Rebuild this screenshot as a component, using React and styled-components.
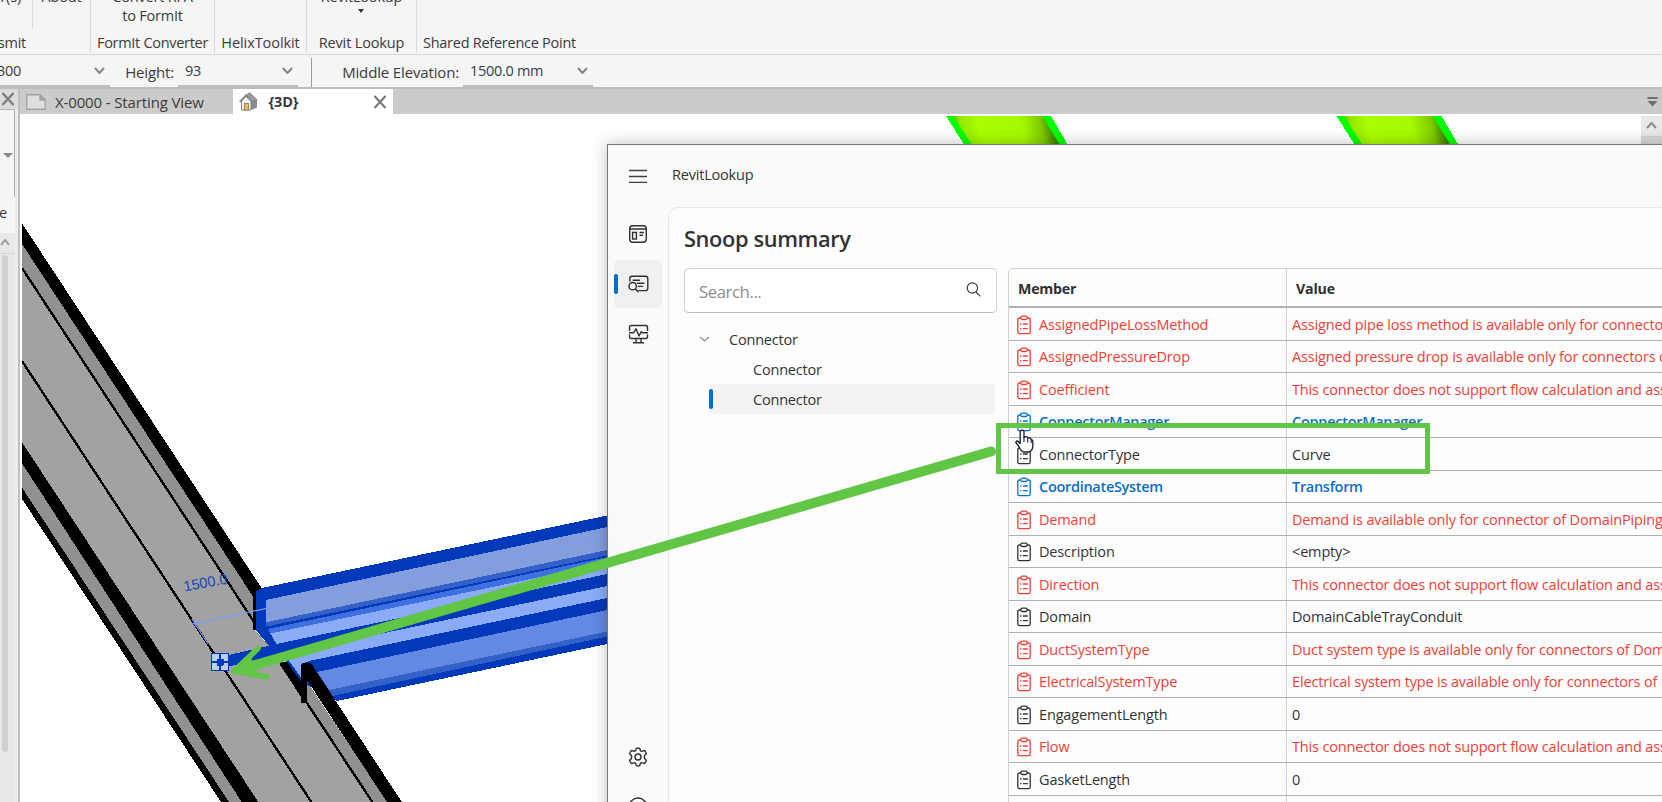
import React from "react";
import styled, { createGlobalStyle, css } from "styled-components";

const GlobalStyle = createGlobalStyle`
  *, *::before, *::after { box-sizing: border-box; }
  body {
    margin: 0;
    overflow: hidden;
    font-family: "Open Sans", "Noto Sans", sans-serif;
    font-size: 14.5px;
    letter-spacing: -0.2px;
    color: #3b3b3b;
  }
  svg { display: block; flex: none; }
`;

const Screen = styled.div`
  position: relative;
  display: flex;
  flex-direction: column;
  width: 1662px;
  height: 802px;
  overflow: hidden;
  background: #f5f5f5;
  white-space: nowrap;
`;

/* ---------- ribbon ---------- */

const Ribbon = styled.div`
  display: flex;
  flex: none;
  height: 55px;
  border-bottom: 1px solid #d9d9d9;
`;

const RibbonPanel = styled.div`
  display: flex;
  flex-direction: column;
  justify-content: flex-end;
  width: ${(p) => p.$width}px;
  height: 53px;
  overflow: hidden;
  text-align: center;
  border-right: 1px solid #dadada;
`;

const LastPanel = styled(RibbonPanel)`
  border-right: 0;
`;

const RibbonTools = styled.div`
  display: flex;
  flex: none;
  justify-content: center;
  line-height: 19px;
  height: 38px;
  margin-bottom: 8px;
`;

const SplitTools = styled(RibbonTools)`
  height: 41px;
  justify-content: flex-start;
  margin-bottom: 5px;
`;

const ToolCell = styled.div`
  display: flex;
  justify-content: ${(p) => (p.$end ? "flex-end" : "center")};
  width: ${(p) => p.$width}px;
  border-right: ${(p) => (p.$divided ? "1px solid #dadada" : "0")};
  padding-right: ${(p) => p.$pad || 0}px;
`;

const ToolMenu = styled.div`
  display: flex;
  flex-direction: column;
  align-items: center;
  gap: 3px;
`;

const Caption = styled.div`
  flex: none;
  line-height: 20px;
  height: 20px;
  letter-spacing: ${(p) => p.$tracking ?? -0.25}px;
`;

const EndCaption = styled(Caption)`
  display: flex;
  justify-content: flex-end;
  width: 26px;
`;

/* ---------- options bar ---------- */

const OptionsBar = styled.div`
  display: flex;
  flex: none;
  height: 34px;
  align-items: flex-start;
  border-bottom: 2px solid #bdbdbd;
`;

const OptionLabel = styled.label`
  width: ${(p) => p.$width}px;
  padding-top: 7px;
  text-align: right;
  font-size: 15px;
  letter-spacing: -0.15px;
  line-height: 20px;
`;

const Combo = styled.div`
  display: flex;
  align-items: center;
  justify-content: space-between;
  width: ${(p) => p.$width}px;
  height: 32px;
  margin-left: ${(p) => p.$gap || 0}px;
  padding: 1px 5px 0 ${(p) => p.$inset || 0}px;
  border-bottom: 2px solid #bdbdbd;
  letter-spacing: -0.3px;
  line-height: 20px;
`;

const EndValue = styled.span`
  display: flex;
  justify-content: flex-end;
  width: 21px;
`;

const OptionDivider = styled.div`
  width: 1px;
  height: 29px;
  margin: 3px 0 0 13px;
  background: #9b9b9b;
`;

/* ---------- workspace ---------- */

const Workspace = styled.div`
  display: flex;
  flex: 1;
  min-height: 0;
`;

const Palette = styled.div`
  display: flex;
  flex-direction: column;
  flex: none;
  width: 20px;
  background: #ededed;
  border-right: 2px solid #bfbfbf;
`;

const PaletteHeader = styled.div`
  height: 20px;
  padding: 3px 0 0 1px;
  background: #dcdcdc;
`;

const TypeSelector = styled.div`
  height: 88px;
  width: 15px;
  padding: 43px 0 0 3px;
  background: #f5f5f5;
  border-top: 1px solid #b5b5b5;
  border-right: 1px solid #adadad;
`;

const TypeCaption = styled.div`
  display: flex;
  justify-content: flex-end;
  height: 36px;
  width: 15px;
  padding: 6px 8px 0 0;
  line-height: 20px;
  background: #f5f5f5;
`;

const PaletteScroll = styled.div`
  flex: 1;
  width: 15px;
  background: #e8e8e8;
`;

const ScrollUp = styled.div`
  height: 21px;
  padding: 6px 0 0 0;
  border-bottom: 1px solid #d6d6d6;
`;

const Thumb = styled.div`
  width: 6px;
  height: 497px;
  margin: 1px 0 0 1.5px;
  border-radius: 3px;
  background: #d1d1d1;
`;

const Documents = styled.div`
  display: flex;
  flex-direction: column;
  flex: 1;
  min-width: 0;
`;

const TabStrip = styled.div`
  display: flex;
  flex: none;
  height: 25px;
  background: #cbcbcb;
`;

const Tab = styled.div`
  display: flex;
  align-items: center;
  width: ${(p) => p.$width}px;
  padding: 0 6px 0 6px;
  font-size: 15px;
  letter-spacing: -0.13px;
  ${(p) =>
    p.$active &&
    css`
      background: #fff;
      font-weight: 700;
      font-size: 14.5px;
    `}
`;

const TabTitle = styled.span`
  flex: 1;
  margin-left: ${(p) => p.$gap}px;
  line-height: 22px;
`;

const TabMenu = styled.div`
  margin: 8px 4px 0 auto;
`;

const Canvas = styled.div`
  display: flex;
  flex: 1;
  justify-content: space-between;
  min-height: 0;
  background: #fff;
`;

const CanvasScroll = styled.div`
  width: 21px;
  margin-top: 2px;
  background: #dadada;
`;

const CanvasScrollUp = styled.div`
  height: 21px;
  padding: 6px 0 0 5px;
  background: #e8e8e8;
  border-bottom: 1px solid #cfcfcf;
`;

/* ---------- lookup window ---------- */

const LookupWindow = styled.div`
  position: absolute;
  left: 607px;
  top: 144px;
  width: 1100px;
  height: 700px;
  display: flex;
  flex-direction: column;
  background: #fafafa;
  border: 1px solid #757575;
  box-shadow: 0 0 15px rgba(0, 0, 0, 0.26);
`;

const TitleBar = styled.div`
  display: flex;
  flex: none;
  align-items: center;
  height: 62px;
  padding-left: 20px;
  gap: 24px;
  line-height: 20px;
  color: #333;
`;

const AppName = styled.span`
  padding-bottom: 2px;
`;

const WindowBody = styled.div`
  display: flex;
  flex: 1;
`;

const NavRail = styled.nav`
  display: flex;
  flex: none;
  flex-direction: column;
  align-items: flex-start;
  width: 60px;
  padding: 3px 0 0 6px;
`;

const NavItem = styled.div`
  display: flex;
  flex: none;
  align-items: center;
  width: 48px;
  height: 48px;
  margin-bottom: 2px;
  border-radius: 5px;
  color: #303030;
  background: ${(p) => (p.$active ? "#f0f0f0" : "transparent")};
`;

const ActiveBar = styled.span`
  width: 4px;
  height: 20px;
  border-radius: 2px;
  background: ${(p) => (p.$on ? "#006fca" : "transparent")};
  margin-right: 9.5px;
`;

const NavSpacer = styled.div`
  flex: none;
  height: 373px;
`;

const Content = styled.main`
  flex: 1;
  padding: 19px 0 0 15px;
  background: #fdfdfd;
  border: 1px solid #e8e8e8;
  border-right: 0;
  border-radius: 10px 0 0 0;
`;

const Heading = styled.h1`
  margin: 0;
  height: 41px;
  font-size: 21.8px;
  font-weight: 600;
  line-height: 24px;
  letter-spacing: -0.37px;
  color: #333;
`;

const Columns = styled.div`
  display: flex;
  gap: 11px;
`;

const Side = styled.div`
  width: 313px;
  flex: none;
`;

const SearchBox = styled.div`
  display: flex;
  align-items: center;
  justify-content: space-between;
  height: 45px;
  padding: 1px 15px 0 14px;
  border: 1px solid #cfcfcf;
  border-bottom-color: #bdbdbd;
  border-radius: 5px;
  background: #fff;
  font-size: 16.8px;
  letter-spacing: -0.45px;
  color: #8c8c8c;
`;

const Tree = styled.div`
  display: flex;
  flex-direction: column;
  padding-top: 11px;
`;

const TreeNode = styled.div`
  display: flex;
  align-items: center;
  height: 30px;
  margin: 0 2px 0 ${(p) => (p.$child ? 25 : 0)}px;
  padding-left: ${(p) => (p.$child ? 0 : 15)}px;
  gap: ${(p) => (p.$child ? 40 : 19)}px;
  border-radius: 4px;
  line-height: 20px;
  color: #333;
  background: ${(p) => (p.$selected ? "#f3f3f3" : "transparent")};
`;

const TreeLabel = styled.span`
  padding-top: 2px;
`;

const TreeBar = styled.span`
  width: 4px;
  height: 20px;
  border-radius: 2px;
  background: ${(p) => (p.$on ? "#006fca" : "transparent")};
`;

const Table = styled.div`
  width: 900px;
  height: 600px;
  flex: none;
  border: 1px solid #cfcfcf;
  border-radius: 5px 0 0 0;
`;

const HeaderRow = styled.div`
  display: flex;
  height: 39px;
  border-bottom: 2px solid #b0b0b0;
  font-weight: 700;
  font-size: 14.2px;
  letter-spacing: -0.2px;
  color: #303030;
`;

const tones = { red: "#ef4036", blue: "#0a6fc4", plain: "#333333" };

const Row = styled.div`
  display: flex;
  height: 32.5px;
  border-bottom: 1px solid #b0b0b0;
  color: ${(p) => tones[p.$tone]};
  font-weight: ${(p) => (p.$tone === "blue" ? 600 : 400)};
  letter-spacing: ${(p) => (p.$tone === "blue" ? -0.3 : -0.16)}px;
  line-height: 20px;
`;

const Cell = styled.div`
  display: flex;
  align-items: center;
  gap: 8px;
  padding: 2px 0 0 ${(p) => p.$inset}px;
  ${(p) =>
    p.$member
      ? css`
          width: 278px;
          flex: none;
          border-right: 1px solid #d0d0d0;
        `
      : css`
          flex: 1;
        `}
`;

const Markup = styled.svg`
  position: absolute;
  left: 0;
  top: 0;
  pointer-events: none;
`;

/* ---------- icons ---------- */

const Chevron = ({ w = 11, h = 7, up, color = "#848484", stroke = 2 }) => (
  <svg width={w} height={h} viewBox={`0 0 ${w} ${h}`} fill="none" stroke={color} strokeWidth={stroke}>
    <path d={up ? `M1 ${h - 1}L${w / 2} 1L${w - 1} ${h - 1}` : `M1 1L${w / 2} ${h - 1}L${w - 1} 1`} />
  </svg>
);

const Cross = () => (
  <svg width="14" height="14" viewBox="0 0 14 14" stroke="#7a7a7a" strokeWidth="2.2">
    <path d="M1.5 1L12.5 13M12.5 1L1.5 13" />
  </svg>
);

const Triangle = ({ w, h, color }) => (
  <svg width={w} height={h} viewBox={`0 0 ${w} ${h}`} fill={color}>
    <path d={`M0 0H${w}L${w / 2} ${h}Z`} />
  </svg>
);

const SheetIcon = () => (
  <svg width="20" height="16" viewBox="0 0 20 16" fill="#dedede" stroke="#a3a3a3" strokeWidth="1.4">
    <path d="M.8.8H14L19.2 6V15.2H.8Z" />
    <path d="M14 .8V6H19.2Z" fill="#ababab" />
  </svg>
);

const HouseIcon = () => (
  <svg width="19" height="19" viewBox="0 0 19 19">
    <path d="M10.5 1L18 8V15.5L12 18V7Z" fill="#8b8b8b" />
    <path d="M2.5 9L7 4.5L12 9V18H2.5Z" fill="#f0f0f0" stroke="#858585" />
    <path d="M.7 9.8L7 3.2L13.2 9.8" fill="none" stroke="#8a8a8a" strokeWidth="1.8" />
    <path d="M7 3.2L10.5.8L18.2 8L13.2 9.8Z" fill="#9b9b9b" stroke="#777" strokeWidth=".8" />
    <rect x="5.5" y="11.5" width="4" height="6.5" fill="#e8bf54" stroke="#8b7537" strokeWidth=".8" />
  </svg>
);

const MenuIcon = () => (
  <svg width="20" height="14" viewBox="0 0 20 14" stroke="#404040" strokeWidth="1.3">
    <path d="M1 1.5H19M1 7.5H19M1 13.3H19" />
  </svg>
);

const DashboardIcon = () => (
  <svg width="20" height="20" viewBox="0 0 20 20" fill="none" stroke="currentColor" strokeWidth="1.4">
    <rect x="1.7" y="1.7" width="16.6" height="16.6" rx="3" />
    <path d="M1.7 5H18.3M11.5 8.5H16M11.5 11.3H15" />
    <rect x="4.6" y="8.4" width="3.8" height="6.6" />
  </svg>
);

const SnoopIcon = () => (
  <svg width="21" height="18" viewBox="0 0 21 18" fill="none" stroke="currentColor" strokeWidth="1.4" strokeLinecap="round">
    <path d="M1.8 6V3.4Q1.8 1.2 4 1.2H17.5Q19.8 1.2 19.8 3.4V13.2Q19.8 15.6 17.5 15.6H11" />
    <path d="M5.2 5.2H11.5M9.5 8.3H16M10.5 11.4H14.5" />
    <circle cx="4.7" cy="11.2" r="3.7" />
    <path d="M7.4 14L10 16.8" />
  </svg>
);

const MonitorIcon = () => (
  <svg width="21" height="20" viewBox="0 0 21 20" fill="none" stroke="currentColor" strokeWidth="1.4" strokeLinejoin="round">
    <path d="M1.5 7V3.5Q1.5 1.5 3.5 1.5H17.5Q19.5 1.5 19.5 3.5V7M1.5 10.5V12.5Q1.5 14.5 3.5 14.5H17.5Q19.5 14.5 19.5 12.5V10.5" />
    <path d="M1 8.8H5.5L8 4.8L11 12L13.3 7.6L14.3 8.8H20M8 14.5V18.5M13 14.5V18.5M5 18.7H16" />
  </svg>
);

const GearIcon = () => (
  <svg width="20" height="20" viewBox="0 0 20 20" fill="none" stroke="currentColor" strokeWidth="1.4" strokeLinejoin="round">
    <circle cx="10" cy="10" r="3" />
    <path d="M8.2 1.3Q10 .8 11.8 1.3L12.3 3.6Q13.1 4.5 14.3 4.1L16.6 3.5Q17.9 4.9 18.4 6.7L16.7 8.3Q16 10 16.7 11.7L18.4 13.3Q17.9 15.1 16.6 16.5L14.3 15.9Q13.1 15.5 12.3 16.4L11.8 18.7Q10 19.2 8.2 18.7L7.7 16.4Q6.9 15.5 5.7 15.9L3.4 16.5Q2.1 15.1 1.6 13.3L3.3 11.7Q4 10 3.3 8.3L1.6 6.7Q2.1 4.9 3.4 3.5L5.7 4.1Q6.9 4.5 7.7 3.6Z" />
  </svg>
);

const InfoIcon = () => (
  <svg width="20" height="20" viewBox="0 0 20 20" fill="none" stroke="currentColor" strokeWidth="1.4">
    <circle cx="10" cy="10" r="9" />
    <path d="M10 9V14M10 6V7.2" />
  </svg>
);

const SearchIcon = () => (
  <svg width="15" height="18" viewBox="0 0 15 18" fill="none" stroke="#3c3c3c" strokeWidth="1.2">
    <circle cx="6.4" cy="6" r="5.2" />
    <path d="M10 10L14.3 14.3" />
  </svg>
);

const ClipboardIcon = () => (
  <svg width="14" height="20" viewBox="0 0 14 20" fill="none" stroke="currentColor" strokeWidth="1.3">
    <path d="M4 3H2.4Q.8 3 .8 4.6V17Q.8 18.6 2.4 18.6H11.6Q13.2 18.6 13.2 17V4.6Q13.2 3 11.6 3H10" />
    <rect x="3.8" y="1.1" width="6.4" height="3.4" rx="1.6" />
    <path d="M3.1 9H4.5M6 9H10.8M3.1 13.6H4.5M6 13.6H10.8" />
  </svg>
);

/* ---------- drawings ---------- */

const TrayDrawing = () => (
  <svg width="587" height="688" viewBox="20 114 587 688" shapeRendering="crispEdges">
    <clipPath id="view"><rect x="22" y="116" width="590" height="686" /></clipPath>
    <g clipPath="url(#view)">
      <path d="M22 223.3L261 587L255 598V630L269 646L281 662L301 690L402 802H221L22 499Z" fill="#a2a2a2" />
      <path d="M22 244L258 603L255 622L22 267Z" fill="#919191" />
      <path d="M22 463.3L241.7 802H229L22 487.7Z" fill="#919191" />
      <path d="M306 680L387.3 802H372L306 701Z" fill="#919191" />
      <path d="M22 223.3L263.5 591L254 603V598L22 244Z" fill="#000" />
      <path d="M22 442.3L258.3 802H241.7L22 463.3Z" fill="#000" />
      <path d="M22 487.7L229 802H221L22 499Z" fill="#000" />
      <path d="M22 268L255 623.5M22 361L312 803" stroke="#000" strokeWidth="2.4" fill="none" />
      <path d="M254.5 597V630" stroke="#000" strokeWidth="2.4" />

      <path d="M256 591L262 588L612 514.5V643L337 701L300 681L284 656L269 646L256 630Z" fill="#0039ba" />
      <path d="M266 600L612 526V549L266 622.3Z" fill="#839ddd" />
      <path d="M266 622.3L612 549V554.5L266 626.7Z" fill="#3461c8" />
      <path d="M268 629L612 556V562L270.5 633.5Z" fill="#3f70e0" />
      <path d="M270.5 633.5L612 562V573L276.5 644Z" fill="#8babf7" />
      <path d="M229 655L269 645.7L290 650V652L229 666.5Z" fill="#0039ba" />
      <path d="M287 653.5L612 585V597L309 661L301 664V681L285 658Z" fill="#8babf7" />
      <path d="M284 656L302 681" stroke="#0039ba" strokeWidth="2.5" />
      <path d="M317 672L612 609V630.5L329 690Z" fill="#6389e3" />
      <path d="M329 690L612 630.5V635.5L332.5 696Z" fill="#3461c8" />

      <path d="M279.5 662H287L303 684V700L279.5 664Z" fill="#000" />
      <path d="M301 703V667Q301 663 305 662.5H308Q311 663 312.5 665.5L402.5 803H387.5L307 680V703Z" fill="#000" />
      <path d="M305 700L373 803" stroke="#000" strokeWidth="2.4" />
    </g>
    <g shapeRendering="auto">
      <path d="M193 624L612 535" stroke="#7c9df2" strokeWidth="1.3" />
      <path d="M192 619L208 644M194 628L200 620" stroke="#7c9df2" strokeWidth="1.2" />
      <text x="184.5" y="591.5" transform="rotate(-10.5 184.5 591.5)" fontFamily="Liberation Sans, Arial, sans-serif" fontSize="14.5" letterSpacing="0" fill="#1648b6">1500.0</text>
    </g>
    <rect x="211.5" y="653.5" width="17" height="17" fill="#b9cdf6" stroke="#0039ba" />
    <path d="M217 662H223M220 659V665" stroke="#0039ba" strokeWidth="7" />
    <path d="M212 662H228M220 654V670" stroke="#0039ba" strokeWidth="2" />
  </svg>
);

const GreenTrays = () => (
  <svg width="520" height="32" viewBox="940 114 520 32">
    <defs>
      <linearGradient id="lime" gradientUnits="userSpaceOnUse" x1="956" y1="138" x2="1053" y2="120">
        <stop offset="0" stopColor="#6fae00" />
        <stop offset="0.07" stopColor="#93e600" />
        <stop offset="0.25" stopColor="#a8ff00" />
        <stop offset="0.68" stopColor="#a4fa00" />
        <stop offset="0.87" stopColor="#7ecb00" />
        <stop offset="1" stopColor="#3d7a00" />
      </linearGradient>
      <g id="tray">
        <path d="M946 116H1051L1068.5 146H965Z" fill="#00ff00" shapeRendering="crispEdges" />
        <path d="M953.5 116H1042L1060.5 146H972.5Z" fill="url(#lime)" />
      </g>
    </defs>
    <use href="#tray" />
    <use href="#tray" x="390.5" />
  </svg>
);

const CanvasArt = styled.div`
  display: flex;
  flex: 1;
  gap: 333px;
`;

const rows = [
  ["red", "AssignedPipeLossMethod", "Assigned pipe loss method is available only for connectors of DomainPiping"],
  ["red", "AssignedPressureDrop", "Assigned pressure drop is available only for connectors of DomainPiping"],
  ["red", "Coefficient", "This connector does not support flow calculation and assignment"],
  ["blue", "ConnectorManager", "ConnectorManager"],
  ["plain", "ConnectorType", "Curve"],
  ["blue", "CoordinateSystem", "Transform"],
  ["red", "Demand", "Demand is available only for connector of DomainPiping"],
  ["plain", "Description", "<empty>"],
  ["red", "Direction", "This connector does not support flow calculation and assignment"],
  ["plain", "Domain", "DomainCableTrayConduit"],
  ["red", "DuctSystemType", "Duct system type is available only for connectors of DomainHvac"],
  ["red", "ElectricalSystemType", "Electrical system type is available only for connectors of DomainElectrical"],
  ["plain", "EngagementLength", "0"],
  ["red", "Flow", "This connector does not support flow calculation and assignment"],
  ["plain", "GasketLength", "0"],
];

export default function App() {
  return (
    <Screen>
      <GlobalStyle />

      <Ribbon>
        <RibbonPanel $width={91}>
          <SplitTools>
            <ToolCell $width={33} $divided $end $pad={11}><span>User(s)</span></ToolCell>
            <ToolCell $width={61}><span>About</span></ToolCell>
          </SplitTools>
          <EndCaption>Transmit</EndCaption>
        </RibbonPanel>
        <RibbonPanel $width={124}>
          <RibbonTools><div>Convert RFA<br />to FormIt</div></RibbonTools>
          <Caption $tracking={-0.3}>FormIt Converter</Caption>
        </RibbonPanel>
        <RibbonPanel $width={92}>
          <Caption $tracking={-0.07}>HelixToolkit</Caption>
        </RibbonPanel>
        <RibbonPanel $width={110}>
          <RibbonTools>
            <ToolMenu>RevitLookup<Triangle w={6} h={4} color="#333" /></ToolMenu>
          </RibbonTools>
          <Caption $tracking={-0.15}>Revit Lookup</Caption>
        </RibbonPanel>
        <LastPanel $width={165}>
          <Caption $tracking={-0.26}>Shared Reference Point</Caption>
        </LastPanel>
      </Ribbon>

      <OptionsBar>
        <Combo $width={110}><EndValue>300</EndValue><Chevron /></Combo>
        <OptionLabel $width={64}>Height:</OptionLabel>
        <Combo $width={120} $gap={4} $inset={7}>93<Chevron /></Combo>
        <OptionDivider />
        <OptionLabel $width={147}>Middle Elevation:</OptionLabel>
        <Combo $width={130} $gap={4} $inset={7}>1500.0 mm<Chevron /></Combo>
      </OptionsBar>

      <Workspace>
        <Palette>
          <PaletteHeader><Cross /></PaletteHeader>
          <TypeSelector><Triangle w={10} h={5} color="#8a8a8a" /></TypeSelector>
          <TypeCaption>Type</TypeCaption>
          <PaletteScroll>
            <ScrollUp><Chevron up color="#999" w={10} /></ScrollUp>
            <Thumb />
          </PaletteScroll>
        </Palette>
        <Documents>
          <TabStrip>
            <Tab $width={213}><SheetIcon /><TabTitle $gap={9}>X-0000 - Starting View</TabTitle></Tab>
            <Tab $width={160} $active><HouseIcon /><TabTitle $gap={10.5}>{"{3D}"}</TabTitle><Cross /></Tab>
            <TabMenu>
              <svg width="11" height="10" viewBox="0 0 11 10" fill="#6f6f6f"><path d="M.5 0H10.5V2H.5ZM.5 4H10.5L5.5 9.5Z" /></svg>
            </TabMenu>
          </TabStrip>
          <Canvas>
            <CanvasArt><TrayDrawing /><GreenTrays /></CanvasArt>
            <CanvasScroll><CanvasScrollUp><Chevron up w={11} h={7} color="#8a8a8a" /></CanvasScrollUp></CanvasScroll>
          </Canvas>
        </Documents>
      </Workspace>

      <LookupWindow>
        <TitleBar><MenuIcon /><AppName>RevitLookup</AppName></TitleBar>
        <WindowBody>
          <NavRail>
            <NavItem><ActiveBar /><DashboardIcon /></NavItem>
            <NavItem $active><ActiveBar $on /><SnoopIcon /></NavItem>
            <NavItem><ActiveBar /><MonitorIcon /></NavItem>
            <NavSpacer />
            <NavItem><ActiveBar /><GearIcon /></NavItem>
            <NavItem><ActiveBar /><InfoIcon /></NavItem>
          </NavRail>
          <Content>
            <Heading>Snoop summary</Heading>
            <Columns>
              <Side>
                <SearchBox>Search...<SearchIcon /></SearchBox>
                <Tree>
                  <TreeNode><Chevron color="#909090" stroke={1.2} w={11} h={6} /><TreeLabel>Connector</TreeLabel></TreeNode>
                  <TreeNode $child><TreeBar /><TreeLabel>Connector</TreeLabel></TreeNode>
                  <TreeNode $child $selected><TreeBar $on /><TreeLabel>Connector</TreeLabel></TreeNode>
                </Tree>
              </Side>
              <Table>
                <HeaderRow>
                  <Cell $member $inset={9}>Member</Cell>
                  <Cell $inset={9}>Value</Cell>
                </HeaderRow>
                {rows.map(([tone, member, value]) => (
                  <Row key={member} $tone={tone}>
                    <Cell $member $inset={8}><ClipboardIcon />{member}</Cell>
                    <Cell $inset={5}>{value}</Cell>
                  </Row>
                ))}
                <Row><Cell $member /></Row>
              </Table>
            </Columns>
          </Content>
        </WindowBody>
      </LookupWindow>

      <Markup width="1662" height="802" viewBox="0 0 1662 802">
        <path d="M991 451.5L245 668" stroke="#61c546" strokeWidth="10" strokeLinecap="round" />
        <path d="M258 648.5L234 671L267 677" fill="none" stroke="#61c546" strokeWidth="5.5" strokeLinecap="round" strokeLinejoin="round" />
        <path d="M234 670L253 653L251 664L258 673Z" fill="#61c546" />
        <rect x="998.5" y="425.5" width="429" height="46" fill="none" stroke="#61c546" strokeWidth="5" />
        <path d="M1020.2 431.5Q1022.5 428.5 1024 431.5V437.5Q1026.5 435.5 1027.7 438Q1030.2 437 1031.2 439.6Q1033.2 439.6 1032.8 443V446Q1032.8 451 1028.5 452H1023Q1020 450 1018.6 446L1015.8 442.5Q1016.6 439 1020.2 443.5Z" fill="#fff" stroke="#151b35" strokeWidth="1.3" strokeLinejoin="round" />
        <path d="M1024 437V442M1027.7 438V442.5M1031.2 440V443" stroke="#151b35" strokeWidth="1.1" />
      </Markup>
    </Screen>
  );
}
